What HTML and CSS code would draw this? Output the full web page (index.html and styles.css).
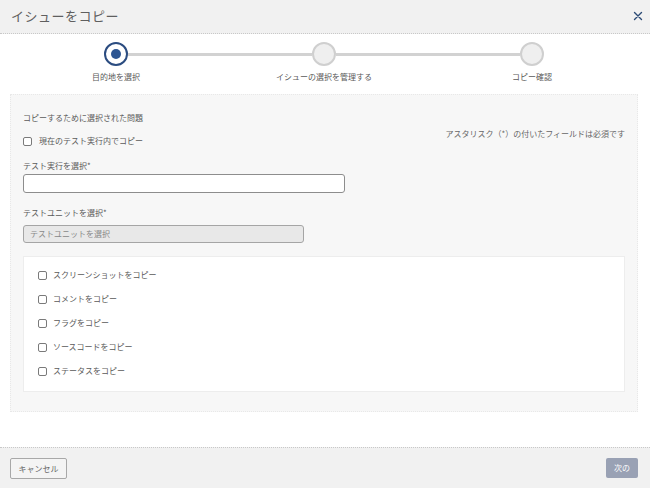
FILE: index.html
```html
<!DOCTYPE html>
<html lang="ja">
<head>
<meta charset="utf-8">
<title>イシューをコピー</title>
<link rel="stylesheet" href="styles.css">
</head>
<body>
<div class="dialog">
  <header class="head">
    <h1 class="title">イシューをコピー</h1>
    <button class="close" aria-label="閉じる">
      <svg width="10" height="10" viewBox="0 0 10 10"><path d="M1.5 1.5L8.5 8.5M8.5 1.5L1.5 8.5" stroke="#2b4a75" stroke-width="1.4" fill="none" stroke-linecap="round"/></svg>
    </button>
  </header>

  <div class="stepper">
    <div class="track">
      <span class="dot active"><span class="inner"></span></span>
      <span class="line"></span>
      <span class="dot"></span>
      <span class="line"></span>
      <span class="dot"></span>
    </div>
    <div class="labels">
      <span>目的地を選択</span>
      <span>イシューの選択を管理する</span>
      <span>コピー確認</span>
    </div>
  </div>

  <div class="body">
    <section class="panel">
      <div class="toprow">
        <div class="leftcol">
          <div class="txt">コピーするために選択された問題</div>
          <label class="check first"><span class="box"></span><span>現在のテスト実行内でコピー</span></label>
        </div>
        <div class="required">アスタリスク（*）の付いたフィールドは必須です</div>
      </div>
      <div class="txt lbl1">テスト実行を選択*</div>
      <div class="input"></div>
      <div class="txt lbl2">テストユニットを選択*</div>
      <div class="select">テストユニットを選択</div>
      <div class="options">
        <label class="check opt"><span class="box"></span><span>スクリーンショットをコピー</span></label>
        <label class="check opt"><span class="box"></span><span>コメントをコピー</span></label>
        <label class="check opt"><span class="box"></span><span>フラグをコピー</span></label>
        <label class="check opt"><span class="box"></span><span>ソースコードをコピー</span></label>
        <label class="check opt"><span class="box"></span><span>ステータスをコピー</span></label>
      </div>
    </section>
  </div>

  <footer class="foot">
    <button class="btn cancel">キャンセル</button>
    <button class="btn next">次の</button>
  </footer>
</div>
</body>
</html>
```

FILE: styles.css
```css
* { box-sizing: border-box; }
html, body { margin: 0; padding: 0; background: #fff; }
body {
  width: 650px;
  height: 488px;
  overflow: hidden;
  font-family: "Noto Sans CJK JP", "Noto Sans", sans-serif;
  color: #666;
}
.dialog {
  display: flex;
  flex-direction: column;
  height: 488px;
}
.head {
  height: 34px;
  flex: none;
  background: #f1f1f1;
  border-bottom: 1px dotted #c8c8c8;
  display: flex;
  align-items: center;
  justify-content: space-between;
  padding: 0 7px 0 11px;
}
.title {
  margin: 0;
  font-size: 13px;
  font-weight: 400;
  color: #5f5f5f;
  letter-spacing: 0.5px;
  line-height: 1;
  margin-top: -2px;
}
.close {
  border: 0;
  background: none;
  padding: 0;
  width: 10px;
  height: 10px;
  display: flex;
  margin-top: -2px;
}

.stepper {
  flex: none;
  height: 60px;
  padding-top: 8px;
}
.track {
  display: flex;
  align-items: center;
  padding: 0 106px 0 104px;
  height: 24px;
}
.dot {
  width: 24px;
  height: 24px;
  border-radius: 50%;
  border: 2px solid #cfcfcf;
  background: #efefef;
  flex: none;
  display: flex;
  align-items: center;
  justify-content: center;
}
.dot.active {
  border-color: #2b4c80;
  background: #fff;
}
.dot .inner {
  width: 10px;
  height: 10px;
  border-radius: 50%;
  background: #2c5592;
}
.line {
  flex: 1;
  height: 3px;
  background: #d2d2d2;
}
.labels {
  display: grid;
  grid-template-columns: 208px 208px 208px;
  padding-left: 12px;
  margin-top: 5px;
  font-size: 8px;
  line-height: 12px;
  color: #5a5a5a;
  text-align: center;
}

.body {
  flex: none;
  padding: 0 12px 0 10px;
}
.panel {
  height: 318px;
  background: #f7f7f7;
  border: 1px dotted #e8e8e8;
  padding: 17px 12px 0 12px;
}
.txt {
  font-size: 8px;
  line-height: 12px;
  color: #5a5a5a;
}
.toprow {
  display: flex;
  justify-content: space-between;
  align-items: flex-start;
}
.required {
  font-size: 8px;
  line-height: 12px;
  color: #666;
  margin-top: 16px;
}
.check {
  display: flex;
  align-items: center;
  font-size: 8px;
  line-height: 12px;
  color: #5a5a5a;
}
.box {
  width: 9px;
  height: 9px;
  border: 1px solid #7a7a7a;
  border-radius: 2px;
  background: #fff;
  flex: none;
}
.check.first {
  margin-top: 11px;
}
.check.first .box { margin-right: 7px; }
.lbl1 { margin-top: 13px; }
.input {
  margin-top: 2px;
  width: 322px;
  height: 19px;
  background: #fff;
  border: 1px solid #8d8d8d;
  border-radius: 3px;
}
.lbl2 { margin-top: 14px; }
.select {
  margin-top: 6px;
  width: 281px;
  height: 18px;
  background: #e8e8e8;
  border: 1px solid #a5a5a5;
  border-radius: 3px;
  font-size: 8px;
  line-height: 16px;
  color: #888;
  padding-left: 6px;
}
.options {
  margin-top: 13px;
  width: 602px;
  height: 136px;
  background: #fff;
  border: 1px solid #ededed;
  padding: 6px 0 0 14px;
}
.opt {
  height: 24px;
}
.opt .box { margin-right: 6px; }

.foot {
  margin-top: auto;
  height: 41px;
  flex: none;
  background: #f1f1f1;
  border-top: 1px dotted #c8c8c8;
  display: flex;
  justify-content: space-between;
  align-items: flex-start;
  padding: 10px 12px 0 10px;
}
.btn {
  font-family: "Noto Sans CJK JP", "Noto Sans", sans-serif;
  font-size: 8px;
  line-height: 1;
  padding: 0;
  border-radius: 2px;
}
.cancel {
  width: 57px;
  height: 21px;
  border: 1px solid #a8a8a8;
  background: #f4f4f4;
  color: #666;
}
.next {
  width: 32px;
  height: 20px;
  border: 0;
  background: #99a1b4;
  color: #fff;
}
```
